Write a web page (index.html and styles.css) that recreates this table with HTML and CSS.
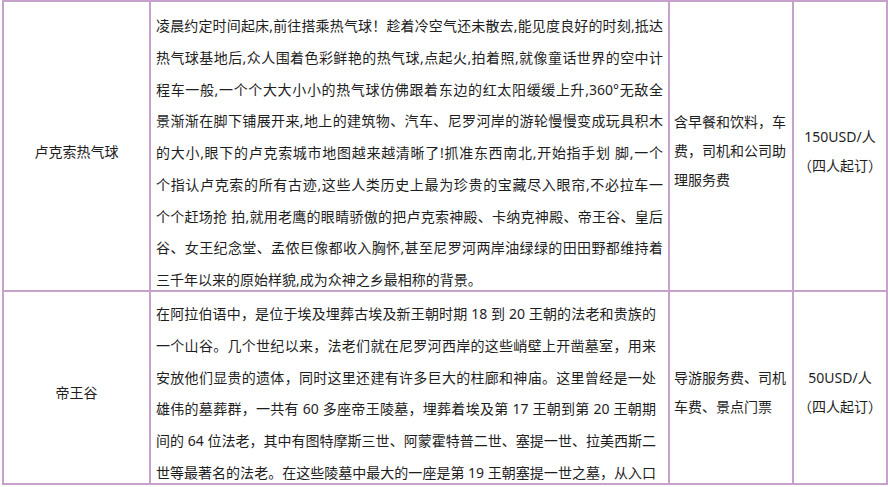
FILE: index.html
```html
<!DOCTYPE html>
<html lang="zh-CN">
<head>
<meta charset="utf-8">
<title>行程自费项目</title>
<link rel="stylesheet" href="styles.css">
</head>
<body>
<table class="tour">
  <colgroup>
    <col class="c-name">
    <col class="c-desc">
    <col class="c-inc">
    <col class="c-price">
  </colgroup>
  <tr>
    <td class="name">卢克索热气球</td>
    <td class="desc">
      <div class="desc-box r1">
        <span class="ln">凌晨约定时间起床,前往搭乘热气球！趁着冷空气还未散去,能见度良好的时刻,抵达</span>
        <span class="ln">热气球基地后,众人围着色彩鲜艳的热气球,点起火,拍着照,就像童话世界的空中计</span>
        <span class="ln">程车一般,一个个大大小小的热气球仿佛跟着东边的红太阳缓缓上升,360°无敌全</span>
        <span class="ln">景渐渐在脚下铺展开来,地上的建筑物、汽车、尼罗河岸的游轮慢慢变成玩具积木</span>
        <span class="ln">的大小,眼下的卢克索城市地图越来越清晰了!抓准东西南北,开始指手划 脚,一个</span>
        <span class="ln">个指认卢克索的所有古迹,这些人类历史上最为珍贵的宝藏尽入眼帘,不必拉车一</span>
        <span class="ln">个个赶场抢 拍,就用老鹰的眼睛骄傲的把卢克索神殿、卡纳克神殿、帝王谷、皇后</span>
        <span class="ln">谷、女王纪念堂、孟侬巨像都收入胸怀,甚至尼罗河两岸油绿绿的田田野都维持着</span>
        <span class="ln last">三千年以来的原始样貌,成为众神之乡最相称的背景。</span>
      </div>
    </td>
    <td class="inc">含早餐和饮料，车费，司机和公司助理服务费</td>
    <td class="price">150USD/人<br>（四人起订）</td>
  </tr>
  <tr>
    <td class="name">帝王谷</td>
    <td class="desc desc-narrow">
      <div class="desc-box r2">
        <span class="ln">在阿拉伯语中，是位于埃及埋葬古埃及新王朝时期 18 到 20 王朝的法老和贵族的</span>
        <span class="ln">一个山谷。几个世纪以来，法老们就在尼罗河西岸的这些峭壁上开凿墓室，用来</span>
        <span class="ln">安放他们显贵的遗体，同时这里还建有许多巨大的柱廊和神庙。这里曾经是一处</span>
        <span class="ln">雄伟的墓葬群，一共有 60 多座帝王陵墓，埋葬着埃及第 17 王朝到第 20 王朝期</span>
        <span class="ln">间的 64 位法老，其中有图特摩斯三世、阿蒙霍特普二世、塞提一世、拉美西斯二</span>
        <span class="ln">世等最著名的法老。在这些陵墓中最大的一座是第 19 王朝塞提一世之墓，从入口</span>
      </div>
    </td>
    <td class="inc">导游服务费、司机车费、景点门票</td>
    <td class="price">50USD/人<br>（四人起订）</td>
  </tr>
</table>
</body>
</html>
```

FILE: styles.css
```css
html, body {
  margin: 0;
  padding: 0;
  background: #ffffff;
}

body {
  font-family: "Noto Sans", "Noto Sans CJK SC", sans-serif;
  font-size: 14px;
  color: #1e1e1e;
}

.tour {
  border-collapse: collapse;
  table-layout: fixed;
  width: 884px;
  margin: 0 0 0 2px;
}

.c-name { width: 147px; }
.c-desc { width: 519px; }
.c-inc { width: 124px; }
.c-price { width: 94px; }

.tour td {
  border: 2px solid #c6a2cb;
  vertical-align: middle;
  padding: 0;
}

.name {
  text-align: center;
  line-height: 28px;
  padding-top: 11px !important;
}

.desc {
  vertical-align: top !important;
  padding: 0 5px !important;
}

.desc-narrow {
  padding-right: 12px !important;
}

.desc-box {
  box-sizing: border-box;
  line-height: 31.75px;
  overflow: hidden;
}

.desc-box.r1 {
  height: 288px;
  padding-top: 8px;
}

.desc-box.r2 {
  height: 191px;
  padding-top: 6px;
}

.ln {
  display: block;
  white-space: nowrap;
  text-align: justify;
  text-align-last: justify;
}

.ln.last {
  text-align-last: left;
}

.inc {
  line-height: 29px;
  padding: 8px 4px 0 4px !important;
}

.price {
  text-align: center;
  line-height: 29px;
  padding-top: 9px !important;
}
```
